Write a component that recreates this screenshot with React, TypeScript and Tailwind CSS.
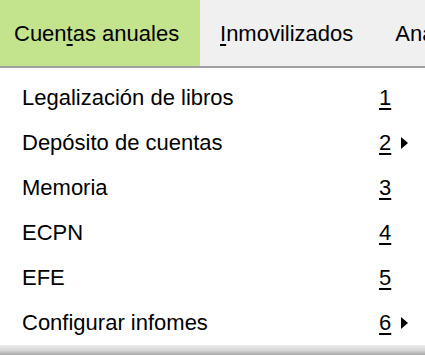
import React from "react";

const items = [
  { label: "Legalización de libros", key: "1", sub: false },
  { label: "Depósito de cuentas", key: "2", sub: true },
  { label: "Memoria", key: "3", sub: false },
  { label: "ECPN", key: "4", sub: false },
  { label: "EFE", key: "5", sub: false },
  { label: "Configurar infomes", key: "6", sub: true },
];

function Arrow() {
  return (
    <svg width="7" height="12" viewBox="0 0 7 12" className="block">
      <path d="M0 0 L7 6 L0 12 Z" fill="#000" />
    </svg>
  );
}

export default function App() {
  return (
    <div
      className="w-[425px] h-[355px] bg-white overflow-hidden text-black"
      style={{ fontFamily: '"Liberation Sans", Arial, sans-serif' }}
    >
      {/* Menu bar */}
      <div className="flex h-[66px] bg-[#f0f0f0] text-[22px] whitespace-nowrap">
        <div className="w-[200px] shrink-0 bg-[#c3e38d] flex items-center pl-[14px]">
          Cuen<span className="underline underline-offset-[3px]">t</span>as anuales
        </div>
        <div className="flex items-center pl-[20px] shrink-0">
          <span className="underline underline-offset-[3px]">I</span>nmovilizados
        </div>
        <div className="flex items-center pl-[42px]">Ana</div>
      </div>
      <div className="h-[2px] bg-[#a0a0a0]" />

      {/* Dropdown */}
      <div className="bg-white h-[277px] pt-[7px]">
        {items.map((it) => (
          <div key={it.key} className="flex items-center h-[45px] text-[22px]">
            <div className="pl-[22px] w-[379px]">{it.label}</div>
            <div className="w-[16px] underline underline-offset-[3px]">{it.key}</div>
            <div className="pl-[6px]">{it.sub && <Arrow />}</div>
          </div>
        ))}
      </div>
      <div className="h-[10px] bg-gradient-to-b from-[#ececec] via-[#d8d8d8] to-[#a8a8a8]" />
    </div>
  );
}
